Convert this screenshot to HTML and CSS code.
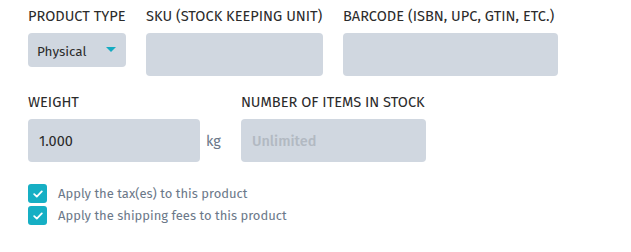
FILE: index.html
```html
<!DOCTYPE html>
<html>
<head>
<meta charset="utf-8">
<link rel="stylesheet" href="styles.css">
</head>
<body>
<div class="form">
  <div class="row">
    <div class="field f-type">
      <div class="label">PRODUCT TYPE</div>
      <div class="select"><span>Physical</span><span class="caret"></span></div>
    </div>
    <div class="field f-sku">
      <div class="label">SKU (STOCK KEEPING UNIT)</div>
      <div class="input"></div>
    </div>
    <div class="field f-barcode">
      <div class="label">BARCODE (ISBN, UPC, GTIN, ETC.)</div>
      <div class="input"></div>
    </div>
  </div>
  <div class="row row2">
    <div class="field">
      <div class="label">WEIGHT</div>
      <div class="with-unit">
        <div class="input f-weight"><span class="value">1.000</span></div>
        <span class="unit">kg</span>
      </div>
    </div>
    <div class="field f-stock">
      <div class="label">NUMBER OF ITEMS IN STOCK</div>
      <div class="input"><span class="placeholder">Unlimited</span></div>
    </div>
  </div>
  <div class="checks">
    <label class="check"><span class="box"><svg viewBox="0 0 10 8" width="10" height="8"><path d="M1.2 4.2 L3.8 6.6 L8.8 1.4" fill="none" stroke="#fff" stroke-width="1.8" stroke-linecap="round" stroke-linejoin="round"/></svg></span><span class="ctext">Apply the tax(es) to this product</span></label>
    <label class="check"><span class="box"><svg viewBox="0 0 10 8" width="10" height="8"><path d="M1.2 4.2 L3.8 6.6 L8.8 1.4" fill="none" stroke="#fff" stroke-width="1.8" stroke-linecap="round" stroke-linejoin="round"/></svg></span><span class="ctext">Apply the shipping fees to this product</span></label>
  </div>
</div>
</body>
</html>
```
FILE: styles.css
```css
html, body {
  margin: 0;
  padding: 0;
  background: #ffffff;
}
body {
  font-family: "Fira Sans", Roboto, "Liberation Sans", sans-serif;
  color: #2a2a2a;
}
.form {
  padding: 6px 0 0 28px;
}
.row {
  display: flex;
  gap: 20px;
  align-items: flex-start;
}
.row2 {
  margin-top: 16px;
}
.label {
  font-size: 14.6px;
  line-height: 20px;
  height: 20px;
  color: #2b2b2b;
  margin-bottom: 7px;
  white-space: nowrap;
}
.select {
  width: 98px;
  height: 34px;
  box-sizing: border-box;
  background: #d0d7e0;
  border-radius: 4px;
  display: flex;
  align-items: center;
  justify-content: space-between;
  padding: 2px 10px 0 9px;
  font-size: 13.5px;
  color: #2b2b2b;
}
.caret {
  width: 0;
  height: 0;
  border-left: 5px solid transparent;
  border-right: 5px solid transparent;
  border-top: 5px solid #14abc1;
  margin-top: -4px;
}
.input {
  height: 43px;
  background: #d0d7e0;
  border-radius: 4px;
  box-sizing: border-box;
  display: flex;
  align-items: center;
  padding: 0 11px;
  font-size: 14.5px;
}
.f-sku .input { width: 177px; }
.f-barcode .input { width: 215px; }
.f-weight { width: 172px; }
.f-stock .input { width: 185px; }
.with-unit {
  display: flex;
  align-items: center;
  gap: 6px;
}
.unit {
  font-size: 14.5px;
  color: #6b7889;
}
.value { color: #2b2b2b; }
.placeholder {
  color: #b2b9c2;
  font-weight: 500;
}
.checks {
  margin-top: 22px;
  display: flex;
  flex-direction: column;
  gap: 3px;
}
.check {
  display: flex;
  align-items: center;
  gap: 11px;
  height: 19px;
}
.box {
  width: 19px;
  height: 19px;
  border-radius: 3px;
  background: #16afc4;
  display: flex;
  align-items: center;
  justify-content: center;
}
.ctext {
  font-size: 13px;
  color: #6b7889;
}
```
